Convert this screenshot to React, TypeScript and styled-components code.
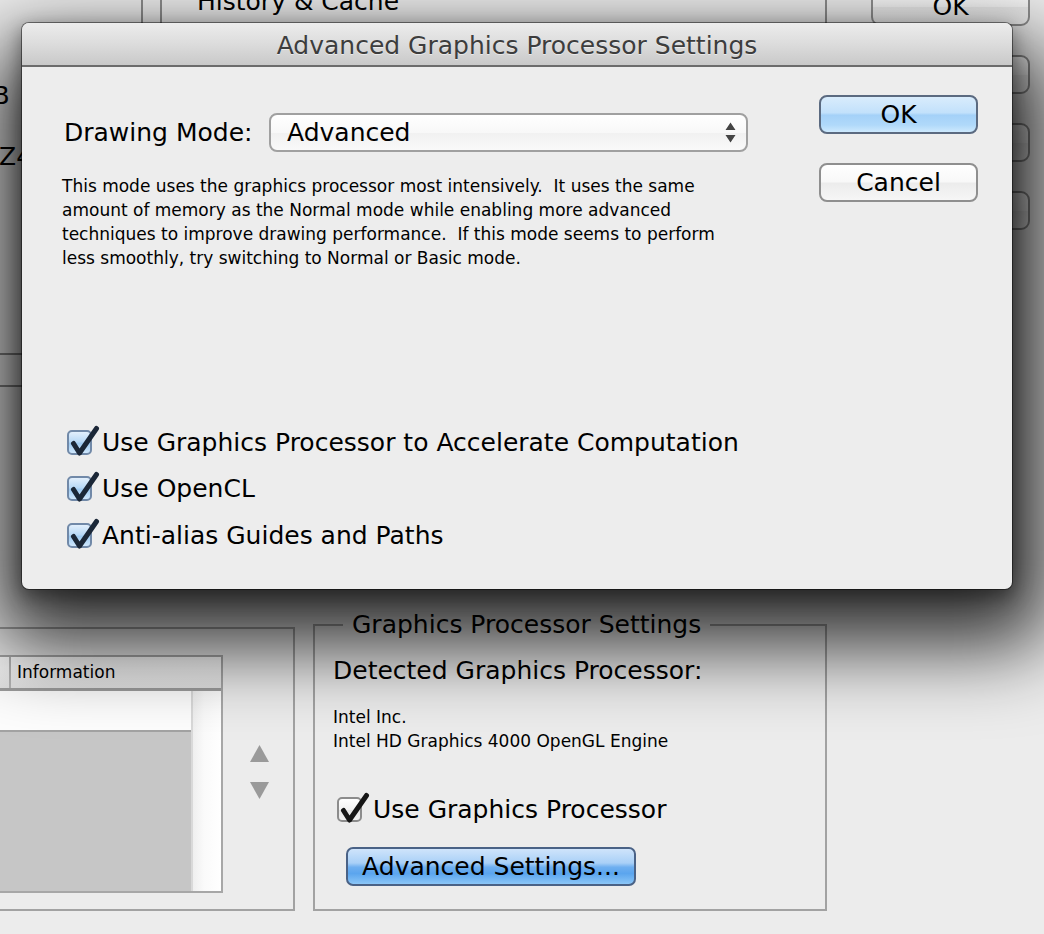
import React from "react";
import styled, { createGlobalStyle, css } from "styled-components";

const Global = createGlobalStyle`
  html, body { margin: 0; padding: 0; }
  *, *::before, *::after { box-sizing: border-box; }
  body {
    background: #ececec;
    font-family: "DejaVu Sans", "Lucida Grande", sans-serif;
    color: #000;
  }
`;

const FONT = `"DejaVu Sans", "Lucida Grande", sans-serif`;

const Screen = styled.div`
  position: relative;
  width: 1044px;
  height: 934px;
  overflow: hidden;
  background: #ececec;
  font-family: ${FONT};
  color: #000;
`;

/* ---------- background preferences window ---------- */

const Window = styled.div`
  display: flex;
  flex-direction: column;
  gap: 25px;
  margin-top: -13px;
`;

const TopRow = styled.div`
  display: flex;
  height: 598px;
`;

const LeftPane = styled.div`
  width: 143px;
  border-right: 2px solid #8c8c8c;
  overflow: hidden;
  display: flex;
  flex-direction: column;
`;

const PaneText = styled.div<{ $top: number; $shift: number }>`
  margin-top: ${(p) => p.$top}px;
  margin-left: ${(p) => p.$shift}px;
  font-size: 25px;
  line-height: 30px;
  white-space: nowrap;
`;

const PaneBar = styled.div`
  margin-top: 181px;
  height: 34px;
  border-top: 2px solid #858585;
  border-bottom: 2px solid #858585;
`;

const CenterPanel = styled.div`
  margin-left: 17px;
  width: 667px;
  border-left: 2px solid #8c8c8c;
  border-right: 2px solid #8c8c8c;
  padding-left: 35px;
  font-size: 25px;
  line-height: 30px;
  white-space: nowrap;
`;

const RightCol = styled.div`
  margin-left: 44px;
  width: 159px;
  display: flex;
  flex-direction: column;
  gap: 29px;
`;

const BgButton = styled.div`
  height: 39px;
  border: 2px solid #8e8e8e;
  border-radius: 9px;
  background: linear-gradient(#fdfdfd, #f3f3f3 50%, #e8e8e8 51%, #f2f2f2);
  font-size: 25px;
  line-height: 35px;
  text-align: center;
`;

const BottomRow = styled.div`
  display: flex;
  align-items: flex-end;
  gap: 18px;
  margin-left: -60px;
`;

const ListGroup = styled.div`
  width: 355px;
  height: 284px;
  border: 2px solid #a2a2a2;
  padding-top: 26px;
  display: flex;
  align-items: flex-start;
`;

const Table = styled.div`
  width: 281px;
  display: flex;
  flex-direction: column;
  border: 2px solid #a7a7a7;
  border-left: none;
`;

const HeaderRow = styled.div`
  display: flex;
  height: 34px;
  border-bottom: 3px solid #9c9c9c;
  background: linear-gradient(#ffffff, #f4f4f4 45%, #e3e3e3);
`;

const HeaderCell = styled.div<{ $width?: number }>`
  ${(p) =>
    p.$width
      ? css`
          width: ${p.$width}px;
          border-right: 2px solid #b4b4b4;
        `
      : css`
          flex: 1;
        `}
  padding-left: 6px;
  font-size: 17px;
  line-height: 31px;
`;

const TableBody = styled.div`
  display: flex;
  height: 200px;
`;

const Rows = styled.div`
  flex: 1;
  display: flex;
  flex-direction: column;
`;

const Row = styled.div<{ $fill: "white" | "grey" }>`
  ${(p) =>
    p.$fill === "white"
      ? css`
          height: 41px;
          background: #fdfdfd;
          border-bottom: 2px solid #a3a3a3;
        `
      : css`
          flex: 1;
          background: #c6c6c6;
        `}
`;

const ScrollTrack = styled.div`
  width: 30px;
  border-left: 2px solid #d9d9d9;
  background: linear-gradient(90deg, #efefef, #fafafa 40%, #ffffff);
`;

const ArrowCol = styled.div`
  flex: 1;
  display: flex;
  flex-direction: column;
  align-items: center;
  gap: 20px;
  padding-top: 90px;
  padding-left: 2px;
`;

const Group = styled.fieldset`
  margin: 0;
  padding: 0 0 0 18px;
  width: 514px;
  height: 301px;
  min-inline-size: 0;
  border: 2px solid #a2a2a2;
  display: flex;
  flex-direction: column;
  align-items: flex-start;
`;

const Legend = styled.legend`
  margin-left: 10px;
  padding: 0 9px;
  font-size: 25px;
  line-height: 30px;
  white-space: nowrap;
`;

const GroupHeading = styled.div`
  margin-top: 16px;
  font-size: 25px;
  line-height: 30px;
  white-space: nowrap;
`;

const SmallLines = styled.div`
  margin-top: 19px;
  font-size: 17px;
  line-height: 24px;
  white-space: nowrap;
`;

const GpuCheckRow = styled.div`
  margin-top: 41px;
  display: flex;
  align-items: center;
  height: 30px;
  padding-left: 4px;
  gap: 11px;
  font-size: 25px;
  white-space: nowrap;
`;

const BlueButton = styled.div`
  margin-top: 23px;
  margin-left: 13px;
  width: 290px;
  height: 39px;
  border: 2px solid #4a6286;
  border-radius: 7px;
  background: linear-gradient(
    #cfe4fb,
    #a9d0f7 40%,
    #6eaff0 52%,
    #5ba5ee 70%,
    #8bc6f7
  );
  font-size: 25px;
  line-height: 35px;
  text-align: center;
  white-space: nowrap;
`;

/* ---------- dialog sheet ---------- */

const SheetShadow = styled.div`
  position: absolute;
  left: -4px;
  top: 44px;
  width: 1052px;
  height: 602px;
  border-radius: 30px;
  background: rgba(0, 0, 0, 0.8);
  filter: blur(40px);
`;

const Dialog = styled.div`
  position: absolute;
  left: 22px;
  top: 23px;
  width: 990px;
  height: 566px;
  border-radius: 7px;
  background: #ededed;
  display: flex;
  flex-direction: column;
  overflow: hidden;
  box-shadow: 0 6px 18px 2px rgba(0, 0, 0, 0.35), 0 0 0 1px rgba(0, 0, 0, 0.45);
`;

const TitleBar = styled.div`
  height: 44px;
  flex: none;
  padding-top: 3px;
  border-bottom: 2px solid #6c6c6c;
  background: linear-gradient(#ececec, #dcdcdc 50%, #c9c9c9);
  text-align: center;
  font-size: 25px;
  line-height: 39px;
  color: #3d3d3d;
  text-shadow: 0 1px 0 rgba(255, 255, 255, 0.55);
  white-space: nowrap;
`;

const Body = styled.div`
  flex: 1;
  display: flex;
  padding: 28px 34px 0 40px;
`;

const MainCol = styled.div`
  flex: 1;
  display: flex;
  flex-direction: column;
  padding-top: 18px;
`;

const ModeRow = styled.div`
  display: flex;
  align-items: center;
  height: 39px;
`;

const ModeLabel = styled.div`
  width: 205px;
  margin-left: 2px;
  font-size: 25px;
  white-space: nowrap;
`;

const Select = styled.div`
  width: 479px;
  height: 39px;
  border: 2px solid #a0a0a0;
  border-radius: 8px;
  background: linear-gradient(#ffffff, #f8f8f8 50%, #f1f1f1 51%, #f9f9f9);
  display: flex;
  align-items: center;
  justify-content: space-between;
  padding: 0 10px 0 16px;
  font-size: 25px;
`;

const Description = styled.div`
  margin-top: 22px;
  font-size: 17px;
  line-height: 24px;
  white-space: pre;
`;

const Options = styled.div`
  margin-top: 149px;
  display: flex;
  flex-direction: column;
`;

const OptionRow = styled.div`
  display: flex;
  align-items: center;
  height: 46.5px;
  padding-left: 5px;
  gap: 10px;
  font-size: 25px;
  white-space: nowrap;
`;

const ButtonCol = styled.div`
  width: 159px;
  display: flex;
  flex-direction: column;
  gap: 29px;
`;

const DialogButton = styled.div<{ $primary?: boolean }>`
  height: 39px;
  border-radius: 8px;
  font-size: 25px;
  line-height: 35px;
  text-align: center;
  ${(p) =>
    p.$primary
      ? css`
          border: 2px solid #5b6a80;
          background: linear-gradient(
            #d9ecfc,
            #c2e1fb 45%,
            #a4d1f8 52%,
            #b0d9fa 80%,
            #cde9fd
          );
        `
      : css`
          border: 2px solid #8f8f8f;
          background: linear-gradient(#ffffff, #f8f8f8 48%, #ececec 52%, #f6f6f6);
        `}
`;

/* ---------- checkbox ---------- */

const Box = styled.span<{ $tone: "blue" | "gray" }>`
  position: relative;
  flex: none;
  width: 25px;
  height: 25px;
  border-radius: 5px;
  ${(p) =>
    p.$tone === "blue"
      ? css`
          border: 2px solid #7189a8;
          background: linear-gradient(#e2effc, #b9d9f6 45%, #9fcbf2 55%, #cfe7fc);
        `
      : css`
          border: 2px solid #8c8c8c;
          background: linear-gradient(#ffffff, #f2f2f2 50%, #e4e4e4 51%, #f0f0f0);
        `}
`;

const Mark = styled.svg<{ $tone: "blue" | "gray" }>`
  position: absolute;
  left: -2px;
  top: -8px;
  width: 34px;
  height: 34px;
  overflow: visible;
  fill: none;
  stroke: ${(p) => (p.$tone === "blue" ? "#1b2737" : "#151515")};
  stroke-width: 5;
  stroke-linecap: round;
  stroke-linejoin: round;
`;

const CheckBox = ({ tone }: { tone: "blue" | "gray" }) => (
  <Box $tone={tone}>
    <Mark $tone={tone} viewBox="-2 -8 34 34">
      <path d="M4.5 11.5 L10.5 21 L27.5 -3.5" />
    </Mark>
  </Box>
);

const UpDown = () => (
  <svg width="11" height="21" viewBox="0 0 11 21">
    <path d="M0.5 8 L5.5 0.5 L10.5 8 Z M0.5 13 L10.5 13 L5.5 20.5 Z" fill="#444" />
  </svg>
);

const Triangle = ({ dir }: { dir: "up" | "down" }) => (
  <svg width="19" height="17" viewBox="0 0 19 17">
    <path
      d={dir === "up" ? "M0 17 L9.5 0 L19 17 Z" : "M0 0 L19 0 L9.5 17 Z"}
      fill="#9a9a9a"
    />
  </svg>
);

export default function App() {
  return (
    <Screen>
      <Global />
      <Window>
        <TopRow>
          <LeftPane>
            <PaneText $top={94} $shift={-29}>
              MB
            </PaneText>
            <PaneText $top={31} $shift={-1}>
              Z4
            </PaneText>
            <PaneBar />
          </LeftPane>
          <CenterPanel>History &amp; Cache</CenterPanel>
          <RightCol>
            <BgButton>OK</BgButton>
            <BgButton />
            <BgButton />
            <BgButton />
          </RightCol>
        </TopRow>
        <BottomRow>
          <ListGroup>
            <Table>
              <HeaderRow>
                <HeaderCell $width={69} />
                <HeaderCell>Information</HeaderCell>
              </HeaderRow>
              <TableBody>
                <Rows>
                  <Row $fill="white" />
                  <Row $fill="grey" />
                </Rows>
                <ScrollTrack />
              </TableBody>
            </Table>
            <ArrowCol>
              <Triangle dir="up" />
              <Triangle dir="down" />
            </ArrowCol>
          </ListGroup>
          <Group>
            <Legend>Graphics Processor Settings</Legend>
            <GroupHeading>Detected Graphics Processor:</GroupHeading>
            <SmallLines>
              Intel Inc.
              <br />
              Intel HD Graphics 4000 OpenGL Engine
            </SmallLines>
            <GpuCheckRow>
              <CheckBox tone="gray" />
              Use Graphics Processor
            </GpuCheckRow>
            <BlueButton>Advanced Settings...</BlueButton>
          </Group>
        </BottomRow>
      </Window>

      <SheetShadow />
      <Dialog>
        <TitleBar>Advanced Graphics Processor Settings</TitleBar>
        <Body>
          <MainCol>
            <ModeRow>
              <ModeLabel>Drawing Mode:</ModeLabel>
              <Select>
                <span>Advanced</span>
                <UpDown />
              </Select>
            </ModeRow>
            <Description>
              {"This mode uses the graphics processor most intensively.  It uses the same\n" +
                "amount of memory as the Normal mode while enabling more advanced\n" +
                "techniques to improve drawing performance.  If this mode seems to perform\n" +
                "less smoothly, try switching to Normal or Basic mode."}
            </Description>
            <Options>
              <OptionRow>
                <CheckBox tone="blue" />
                Use Graphics Processor to Accelerate Computation
              </OptionRow>
              <OptionRow>
                <CheckBox tone="blue" />
                Use OpenCL
              </OptionRow>
              <OptionRow>
                <CheckBox tone="blue" />
                Anti-alias Guides and Paths
              </OptionRow>
            </Options>
          </MainCol>
          <ButtonCol>
            <DialogButton $primary>OK</DialogButton>
            <DialogButton>Cancel</DialogButton>
          </ButtonCol>
        </Body>
      </Dialog>
    </Screen>
  );
}
